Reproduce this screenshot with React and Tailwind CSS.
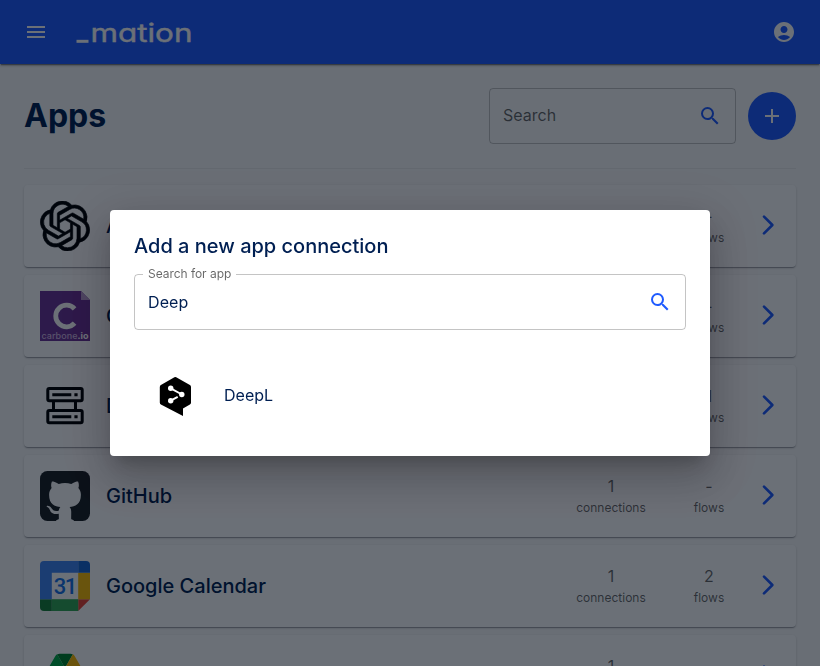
import { MdAccountCircle, MdAdd, MdMenu, MdSearch } from 'react-icons/md';
import { SiOpenai } from 'react-icons/si';

const CarboneLogo = () => (
  <svg viewBox="0 0 50 50" className="size-[50px]">
    <path d="M0 0h41l9 9v41H0z" fill="#6c3296" />
    <path d="M41 0v9h9z" fill="#b79acb" />
    <path d="M34.6 17.8a10.8 10.8 0 1 0 0 14.4" fill="none" stroke="#fff" strokeWidth="4.8" />
    <text x="1.5" y="48" textLength="47" fontSize="9" fontWeight="500" fontFamily="Inter, sans-serif" fill="#cfb8e0">
      carbone<tspan fontWeight="700" fill="#fff">.io</tspan>
    </text>
  </svg>
);

const DatastoreLogo = () => (
  <svg viewBox="0 0 50 50" className="size-[50px]" fill="none" stroke="#000" strokeWidth="3">
    <rect x="7.8" y="7.5" width="34.4" height="12.3" rx="1.5" />
    <rect x="7.8" y="29.5" width="34.4" height="12.3" rx="1.5" />
    <path d="M13.5 20v9.5M35.5 20v9.5M12.3 13.8h19M12.3 35.8h19M34.4 13.8h3.2M34.4 35.8h3.2" />
  </svg>
);

const GithubLogo = () => (
  <svg viewBox="0 0 512 512" className="size-[50px]">
    <rect width="512" height="512" rx="76" fill="#1b1f23" />
    <path
      fill="#fff"
      d="M335 499c14 0 12 17 12 17H165s-2-17 12-17c13 0 16-6 16-12l-1-50c-71 16-86-28-86-28-12-30-28-37-28-37-24-16 1-16 1-16 26 2 40 26 40 26 22 39 59 28 74 22 2-17 9-28 16-35-57-6-116-28-116-126 0-28 10-51 26-69-3-6-11-32 3-67 0 0 21-7 70 26 42-12 86-12 128 0 49-33 70-26 70-26 14 35 6 61 3 67 16 18 26 41 26 69 0 98-60 120-117 126 10 8 18 24 18 48l-1 70c0 6 3 12 16 12z"
    />
  </svg>
);

const CalendarLogo = () => (
  <svg viewBox="0 0 50 50" className="size-[50px]">
    <path d="M11.8 11.8h26.4v26.4H11.8z" fill="#fff" />
    <path d="M38.2 50 50 38.2H38.2z" fill="#ea4335" />
    <path d="M50 11.8H38.2v26.4H50z" fill="#fbbc04" />
    <path d="M38.2 38.2H11.8V50h26.4z" fill="#34a853" />
    <path d="M0 38.2V46a4 4 0 0 0 4 4h7.8V38.2z" fill="#188038" />
    <path d="M50 11.8V4a4 4 0 0 0-4-4h-7.8v11.8z" fill="#1967d2" />
    <path d="M38.2 0H4a4 4 0 0 0-4 4v34.2h11.8V11.8h26.4z" fill="#4285f4" />
    <text x="25.6" y="33" textAnchor="middle" textLength="23.5" fontSize="22" fontWeight="500" fontFamily="Roboto, sans-serif" fill="#1a73e8">31</text>
  </svg>
);

const DriveLogo = () => (
  <svg viewBox="0 0 87.3 78" className="size-[50px]">
    <path d="m6.6 66.85 3.85 6.65c.8 1.4 1.95 2.5 3.3 3.3l13.75-23.8h-27.5c0 1.55.4 3.1 1.2 4.5z" fill="#0066da" />
    <path d="m43.65 25-13.75-23.8c-1.35.8-2.5 1.9-3.3 3.3l-25.4 44a9.06 9.06 0 0 0 -1.2 4.5h27.5z" fill="#00ac47" />
    <path d="m73.55 76.8c1.35-.8 2.5-1.9 3.3-3.3l1.6-2.75 7.65-13.25c.8-1.4 1.2-2.95 1.2-4.5h-27.502l5.852 11.5z" fill="#ea4335" />
    <path d="m43.65 25 13.75-23.8c-1.35-.8-2.9-1.2-4.5-1.2h-18.5c-1.6 0-3.15.45-4.5 1.2z" fill="#00832d" />
    <path d="m59.8 53h-32.3l-13.75 23.8c1.35.8 2.9 1.2 4.5 1.2h50.8c1.6 0 3.15-.45 4.5-1.2z" fill="#2684fc" />
    <path d="m73.4 26.5-12.7-22c-.8-1.4-1.95-2.5-3.3-3.3l-13.75 23.8 16.15 28h27.45c0-1.55-.4-3.1-1.2-4.5z" fill="#ffba00" />
  </svg>
);

const DeeplLogo = () => (
  <svg viewBox="0 0 40 40" className="size-10">
    <path d="M18.4 1.2q.9-.5 1.8 0l13.7 7.7q1.1.7 1.1 2v15.6q0 1.3-1.1 2L27 32.4v7.6L4.9 28.6q-1.1-.7-1.1-2V10.9q0-1.3 1.1-2z" fill="#000" />
    <path d="m14.7 12.3 11.3 6.2M14.7 24.7l7-3.9" stroke="#fff" strokeWidth="1.9" />
    <g fill="#fff">
      <circle cx="14.7" cy="12.3" r="2.7" />
      <circle cx="25.8" cy="18.5" r="2.7" />
      <circle cx="14.7" cy="24.7" r="2.7" />
    </g>
  </svg>
);

const apps = [
  { name: 'AI', logo: <SiOpenai size={50} color="#000" strokeWidth={0.3} />, connections: '1', flows: '-' },
  { name: 'Carbone', logo: <CarboneLogo />, connections: '1', flows: '-' },
  { name: 'Datastore', logo: <DatastoreLogo />, connections: '-', flows: '1' },
  { name: 'GitHub', logo: <GithubLogo />, connections: '1', flows: '-' },
  { name: 'Google Calendar', logo: <CalendarLogo />, connections: '1', flows: '2' },
  { name: 'Google Drive', logo: <DriveLogo />, connections: '1', flows: '-' },
];

function Stat({ value, label }) {
  return (
    <div className="flex w-[98px] flex-col items-center text-black/60">
      <span className="text-base leading-6">{value}</span>
      <span className="text-xs leading-5">{label}</span>
    </div>
  );
}

function AppRow({ app }) {
  return (
    <div className="flex h-[82px] shrink-0 items-center rounded bg-white px-4 shadow-[0_2px_1px_-1px_rgba(0,8,20,0.2),0_1px_1px_rgba(0,8,20,0.14),0_1px_3px_rgba(0,8,20,0.12)]">
      {app.logo}
      <h2 className="ml-4 flex-1 text-xl font-medium">{app.name}</h2>
      <Stat value={app.connections} label="connections" />
      <Stat value={app.flows} label="flows" />
      <svg viewBox="0 0 24 24" className="-mt-0.5 -ml-0.5 size-6" fill="none" stroke="#1f5bff" strokeWidth="2.6" strokeLinecap="round" strokeLinejoin="round">
        <path d="m8 3.6 8.4 8.4L8 20.4" />
      </svg>
    </div>
  );
}

function Header() {
  return (
    <header className="flex h-16 items-center justify-between bg-[#1f5bff] px-6 text-white shadow-[0_2px_1px_-1px_rgba(0,0,0,0.3),0_1px_3px_rgba(0,0,0,0.4)]">
      <div className="flex items-center gap-7">
        <MdMenu size={24} />
        <svg viewBox="0 0 116 32" className="h-8 w-[116px] overflow-visible" fill="#fff">
          <rect x="0.5" y="23.8" width="12" height="3" />
          <text x="14.5" y="25.6" textLength="102" lengthAdjust="spacingAndGlyphs" fontSize="25.5" fontWeight="400" stroke="#fff" strokeWidth="0.4" fontFamily="Inter, sans-serif" style={{ fontFeatureSettings: '"cv11"' }}>mation</text>
        </svg>
      </div>
      <MdAccountCircle size={24} />
    </header>
  );
}

function AddConnectionDialog() {
  return (
    <div className="fixed inset-0 flex items-center justify-center bg-[rgba(0,8,20,0.58)]">
      <div className="h-[246px] w-[600px] rounded bg-white px-6 shadow-[0_11px_15px_-7px_rgba(0,0,0,0.2),0_24px_38px_3px_rgba(0,0,0,0.14),0_9px_46px_8px_rgba(0,0,0,0.12)]">
        <h2 className="pt-5 text-xl leading-8 font-medium">Add a new app connection</h2>
        <fieldset className="mt-[3px] h-[65px] rounded border border-black/23 px-2">
          <legend className="px-[5px] text-xs leading-[18px] tracking-[-0.04px] text-black/60">Search for app</legend>
          <div className="flex items-center justify-between px-[5px] pt-[7px]">
            <span className="tracking-[0.1px]">Deep</span>
            <MdSearch size={24} color="#1f5bff" />
          </div>
        </fieldset>
        <div className="mt-[46px] flex items-center pl-[22px]">
          <DeeplLogo />
          <span className="ml-7 pb-0.5">DeepL</span>
        </div>
      </div>
    </div>
  );
}

export default function App() {
  return (
    <div className="h-[666px] overflow-hidden bg-[#fafafa] font-[Inter,sans-serif] text-[#001f52]">
      <Header />
      <main className="px-6 pt-6">
        <div className="flex h-14 items-center">
          <h1 className="flex-1 text-[32px] font-bold">Apps</h1>
          <div className="flex h-14 w-[247px] items-center justify-between rounded border border-black/23 px-[13px] text-black/60">
            <span className="pb-0.5">Search</span>
            <MdSearch size={24} color="#1f5bff" />
          </div>
          <button className="ml-3 flex size-12 items-center justify-center rounded-full bg-[#1f5bff] text-white">
            <MdAdd size={24} />
          </button>
        </div>
        <hr className="mt-6 mb-4 border-black/5" />
        <div className="flex flex-col gap-2">
          {apps.map((app) => <AppRow key={app.name} app={app} />)}
        </div>
      </main>
      <AddConnectionDialog />
    </div>
  );
}
